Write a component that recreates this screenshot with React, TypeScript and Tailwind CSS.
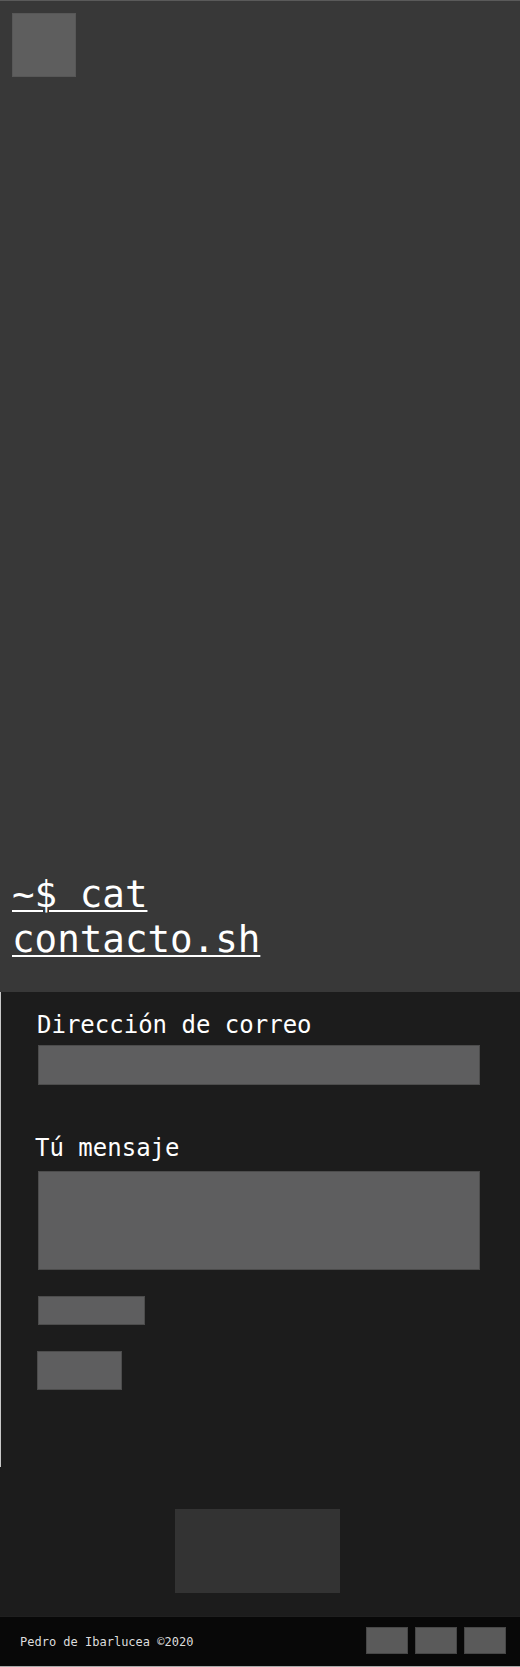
export default function App() {
  return (
    <div className="w-full font-['DejaVu_Sans_Mono',monospace] text-white">
      {/* cabecera */}
      <header className="flex h-[992px] flex-col border-t border-[#5a5a5a] bg-[#383838] px-3 pt-3">
        <div className="h-16 w-16 border border-[#575757] bg-[#5e5e5e]" />
        <h1 className="mt-auto pb-[29px] text-[37.5px] leading-[45.7px] underline decoration-2 underline-offset-[3px]">
          ~$ cat
          <br />
          contacto.sh
        </h1>
      </header>

      {/* formulario */}
      <section className="h-[475px] border-l border-[#c8c8c8] bg-[#1c1c1c] pl-[33px] pt-[15px]">
        <form className="flex flex-col items-start" onSubmit={(e) => e.preventDefault()}>
          <label className="ml-[3px] text-2xl leading-9">Dirección de correo</label>
          <input
            type="email"
            className="ml-1 mt-[2px] h-10 w-[442px] border border-[#4c4c4c] bg-[#5e5e5f] outline-none"
          />
          <label className="ml-px mt-[45px] text-2xl leading-9">Tú mensaje</label>
          <textarea className="ml-1 mt-[5px] h-[99px] w-[442px] resize-none border border-[#4c4c4c] bg-[#5e5e5f] outline-none" />
          <div className="ml-1 mt-[26px] h-[29px] w-[107px] border border-[#4c4c4c] bg-[#5e5e5f]" />
          <button
            type="submit"
            className="ml-[3px] mt-[26px] h-[39px] w-[85px] border border-[#4c4c4c] bg-[#5e5e5f]"
          />
        </form>
      </section>

      <section className="flex h-[149px] justify-center bg-[#1c1c1c] pr-[5px] pt-[42px]">
        <div className="h-[84px] w-[165px] bg-[#333333]" />
      </section>

      {/* pie */}
      <footer className="flex h-[50px] items-center justify-between border-t border-[#1f1f1f] bg-[#080808] pl-5 pr-[14px]">
        <span className="text-xs text-[#dddddd]">Pedro de Ibarlucea ©2020</span>
        <div className="flex gap-[7px] pb-[3px]">
          <div className="h-[27px] w-[42px] border border-[#474747] bg-[#5a5a5a]" />
          <div className="h-[27px] w-[42px] border border-[#474747] bg-[#5a5a5a]" />
          <div className="h-[27px] w-[42px] border border-[#474747] bg-[#5a5a5a]" />
        </div>
      </footer>
      <div className="h-px bg-[#a8a8a8]" />
    </div>
  );
}
